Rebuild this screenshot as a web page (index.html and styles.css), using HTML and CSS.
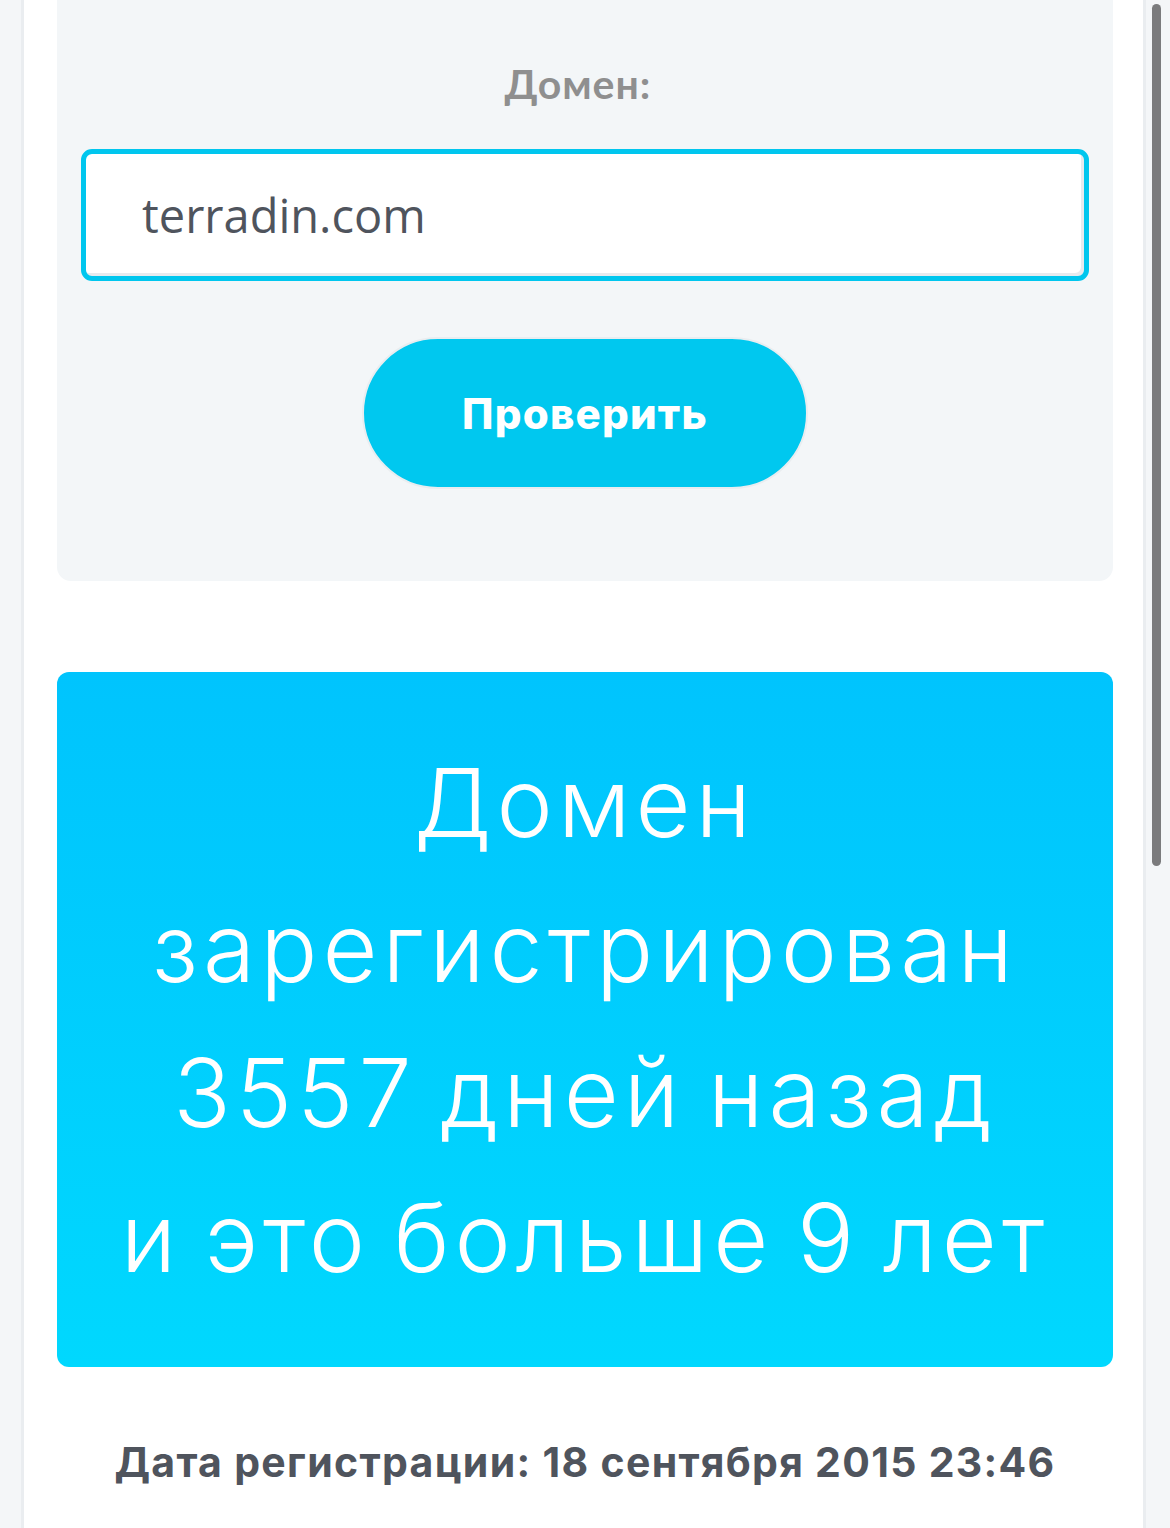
FILE: index.html
```html
<!DOCTYPE html>
<html lang="ru">
<head>
<meta charset="utf-8">
<title>Проверка домена</title>
<link rel="stylesheet" href="styles.css">
</head>
<body>
<div class="page">
  <section class="check-card">
    <div class="label">Домен:</div>
    <div class="input">terradin.com</div>
    <div class="btn-row"><button class="btn">Проверить</button></div>
  </section>
  <section class="result">
    <p class="result-text">Домен<br>зарегистрирован<br>3557 дней назад<br>и это больше 9 лет</p>
  </section>
  <p class="date">Дата регистрации: 18 сентября 2015 23:46</p>
</div>
<div class="scroll-thumb"></div>
</body>
</html>
```
FILE: styles.css
```css
html, body {
  margin: 0;
  padding: 0;
}
body {
  background: #f4f6f8;
  height: 1528px;
  overflow: hidden;
  font-family: "Inter", "DejaVu Sans", sans-serif;
}
.page {
  margin: 0 24px 0 21px;
  height: 1528px;
  box-sizing: border-box;
  background: #ffffff;
  border-left: 3px solid #eaedf0;
  border-right: 3px solid #eaedf0;
  padding: 0 30px 0 33px;
}
.check-card {
  background: #f3f6f8;
  border-radius: 0 0 14px 14px;
  padding: 61px 24px 92px;
}
.label {
  text-align: center;
  padding-right: 14px;
  font-family: "Lato", sans-serif;
  font-weight: 700;
  font-size: 41px;
  line-height: 46px;
  letter-spacing: 1px;
  color: #8f8f8f;
}
.input {
  margin-top: 42px;
  height: 132px;
  box-sizing: border-box;
  border: 5px solid #00c6ee;
  border-radius: 11px;
  background: #fff;
  box-shadow: inset -3px -3px 0 #e7eaee;
  padding: 0 0 1px 56px;
  display: flex;
  align-items: center;
  font-family: "Open Sans", sans-serif;
  font-size: 47px;
  color: #4f545d;
}
.btn-row {
  display: flex;
  justify-content: center;
  margin-top: 56px;
}
.btn {
  width: 446px;
  height: 152px;
  border-radius: 76px;
  border: 2px solid #e9edf0;
  background: #00c8ef;
  color: #fff;
  font-family: "Inter", sans-serif;
  font-weight: 800;
  font-size: 42px;
  letter-spacing: 1.2px;
  padding: 0;
}
.result {
  margin-top: 91px;
  height: 695px;
  border-radius: 12px;
  background: linear-gradient(180deg, #00c4fd 0%, #00d8fe 100%);
  display: flex;
  align-items: center;
  justify-content: center;
}
.result-text {
  margin: 0;
  text-align: center;
  color: #fff;
  font-family: "Inter", sans-serif;
  font-weight: 300;
  font-size: 95px;
  line-height: 145px;
  letter-spacing: 5px;
  word-spacing: -8px;
}
.date {
  margin: 70px 0 0;
  text-align: center;
  color: #4f545d;
  font-family: "Inter", sans-serif;
  font-weight: 700;
  font-size: 41px;
  line-height: 50px;
  letter-spacing: 1.3px;
}
.scroll-thumb {
  position: absolute;
  left: 1152px;
  top: 4px;
  width: 9px;
  height: 862px;
  border-radius: 5px;
  background: #7b7b7d;
}
```
